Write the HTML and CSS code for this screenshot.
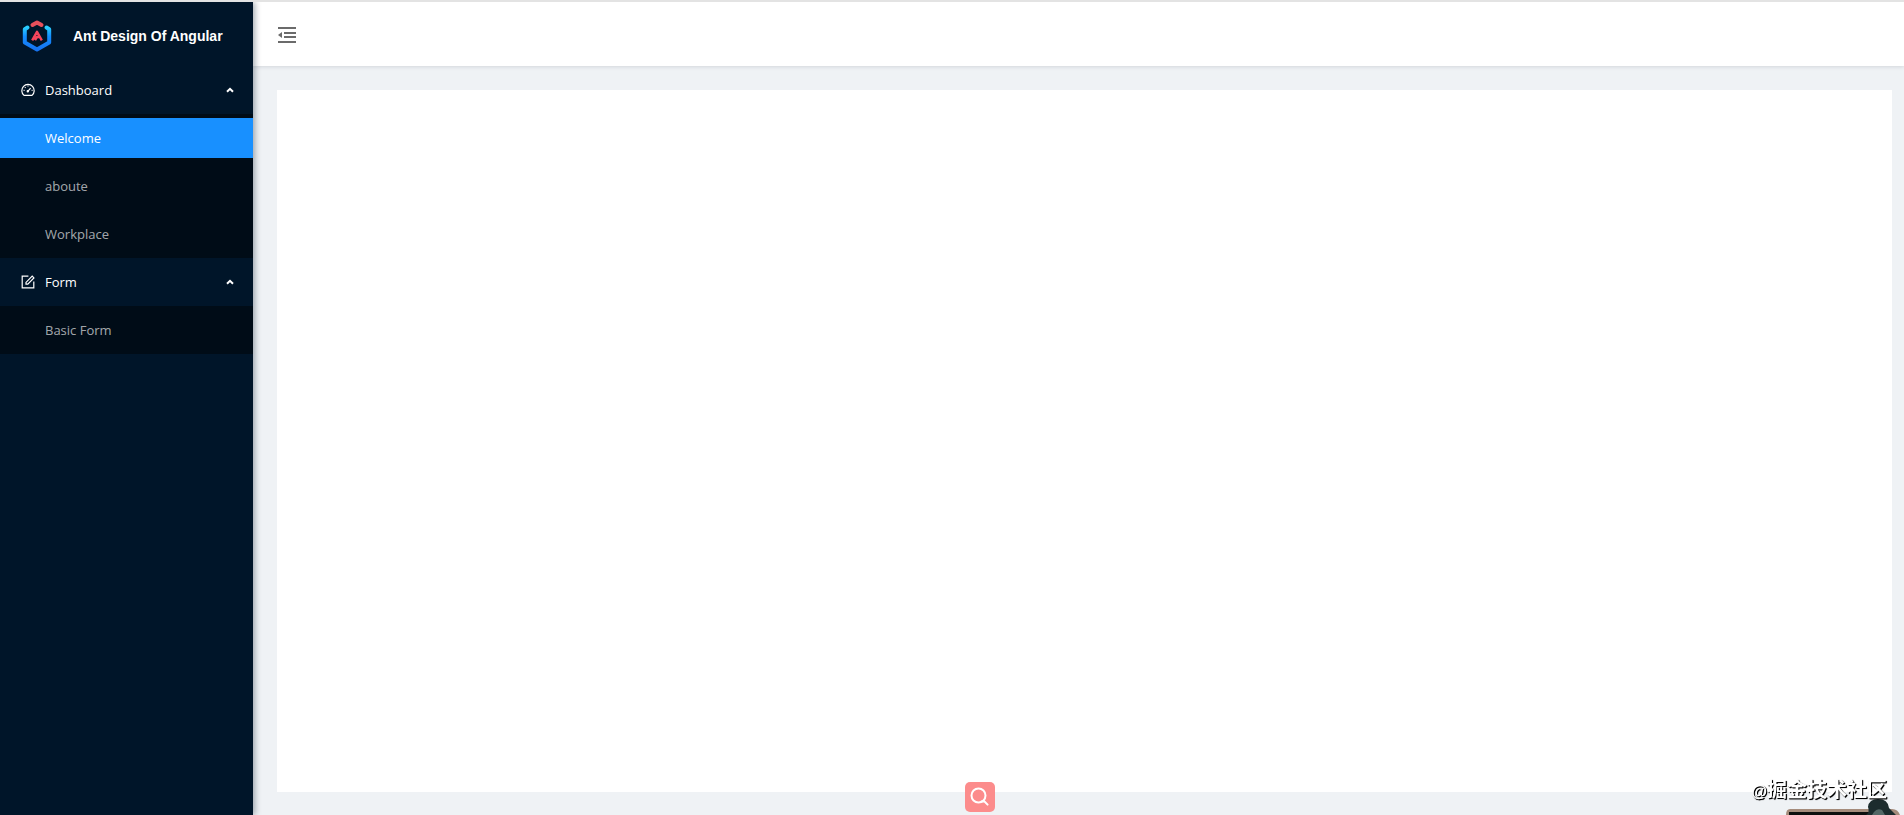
FILE: index.html
```html
<!DOCTYPE html>
<html lang="en">
<head>
    <meta charset="UTF-8">
    <meta name="viewport" content="width=device-width, initial-scale=1.0">
    <title>Ant Design Of Angular</title>
    <link rel="stylesheet" href="styles.css">
</head>
<body>
    <div class="layout">
        <!-- Sidebar -->
        <aside class="sidebar">
            <a class="brand" href="#">
                <svg class="logo" viewBox="0 0 32 32" aria-hidden="true">
                    <defs>
                        <linearGradient id="blue" x1="0" y1="0" x2="0" y2="1">
                            <stop offset="0" stop-color="#29cdff"/>
                            <stop offset="0.4" stop-color="#148eff"/>
                            <stop offset="1" stop-color="#1673f0"/>
                        </linearGradient>
                        <linearGradient id="red" x1="0" y1="0" x2="0" y2="1">
                            <stop offset="0" stop-color="#fa816e"/>
                            <stop offset="1" stop-color="#f51d2c"/>
                        </linearGradient>
                    </defs>
                    <path d="M6.5 7.5 3.8 9.2V22.6L16 29.6 28.2 22.6V9.2L25.5 7.5" fill="none" stroke="url(#blue)" stroke-width="4" stroke-linecap="round" stroke-linejoin="round"/>
                    <path d="M11.5 5 16 2.4 20.5 5" fill="none" stroke="#e8505b" stroke-width="4" stroke-linecap="round" stroke-linejoin="round"/>
                    <path d="M11.2 20.4 16 11.8l4.8 8.6M14 20.2l2-3.2h2.6" fill="none" stroke="#f5455c" stroke-width="2.4" stroke-linejoin="round"/>
                </svg>
                <span class="brand-name">Ant Design Of Angular</span>
            </a>
            <nav class="menu">
                <button class="menu-title" type="button" aria-expanded="true">
                    <svg class="menu-icon" viewBox="0 0 14 14" aria-hidden="true">
                        <path d="M3 12.4a6.2 6.2 0 1 1 8 0z"/>
                        <path d="M6.8 8.4 9.6 5.2M7 2.6v1M2.6 7.4h1M10.6 7.4h1M3.9 4.2l.7.7"/>
                        <circle cx="6.8" cy="8.2" r=".6"/>
                    </svg>
                    <span>Dashboard</span>
                    <svg class="arrow" viewBox="0 0 8 6" aria-hidden="true"><path d="M1 4.8 4 1.8l3 3"/></svg>
                </button>
                <ul class="submenu">
                    <li><a class="menu-item selected" href="#">Welcome</a></li>
                    <li><a class="menu-item" href="#">aboute</a></li>
                    <li><a class="menu-item" href="#">Workplace</a></li>
                </ul>
                <button class="menu-title" type="button" aria-expanded="true">
                    <svg class="menu-icon" viewBox="0 0 14 14" aria-hidden="true">
                        <path d="M7.4 1.2H1.2v11.6h11.6V6.6"/>
                        <path d="M5 9.2V7.4L11.2 1.2l1.7 1.7L6.8 9.2z"/>
                    </svg>
                    <span>Form</span>
                    <svg class="arrow" viewBox="0 0 8 6" aria-hidden="true"><path d="M1 4.8 4 1.8l3 3"/></svg>
                </button>
                <ul class="submenu">
                    <li><a class="menu-item" href="#">Basic Form</a></li>
                </ul>
            </nav>
        </aside>

        <div class="main">
            <header class="header">
                <button class="trigger" type="button" aria-label="Collapse menu">
                    <svg viewBox="0 0 18 16" aria-hidden="true">
                        <path d="M0 1h18M6 6h12M6 10h12M0 15h18" fill="none" stroke="currentColor" stroke-width="2"/>
                        <path d="M0 8l4-3v6z" fill="currentColor"/>
                    </svg>
                </button>
            </header>
            <main class="content"></main>
        </div>
    </div>

    <!-- Floating items over the page -->
    <button class="search" type="button" aria-label="Search">
        <svg viewBox="0 0 20 20" aria-hidden="true">
            <circle cx="8.5" cy="8.5" r="7"/>
            <path d="M11.5 14.5h3M14 14l3.6 3.6"/>
        </svg>
    </button>
    <svg class="pet" viewBox="0 0 120 20" aria-hidden="true">
        <path d="M2 20q0-6 4-6h102q6 0 8 6z" fill="#a58c7c"/>
        <path d="M5 20v-3h100v3z" fill="#0d100f"/>
        <path d="M82 20q4-3 2-8 1-8 10-8 10 0 11 9l7 7z" fill="#1c2c2e"/>
        <path d="M90 17q3-4 8-2l3 5H88z" fill="#536766"/>
    </svg>
    <div class="watermark"><span class="at">@</span>掘金技术社区</div>
</body>
</html>
```
FILE: styles.css
```css
* {
    box-sizing: border-box;
    margin: 0;
    padding: 0;
}

body {
    font-family: "Open Sans", "Noto Sans", sans-serif;
    font-size: 13px;
    background-color: #eff2f5;
    border-top: 2px solid #e3e3e3;
    min-height: 100vh;
    display: flex;
}

a {
    text-decoration: none;
}

button {
    border: none;
    background: none;
    font: inherit;
    cursor: pointer;
}

.layout {
    display: flex;
    flex: 1;
}

.sidebar {
    width: 253px;
    flex-shrink: 0;
    background-color: #001529;
    box-shadow: 2px 0 6px rgba(0, 21, 41, 0.35);
    position: relative;
    z-index: 2;
}

.brand {
    display: flex;
    align-items: center;
    height: 64px;
    padding: 4px 0 0 21px;
    gap: 20px;
}

.logo {
    width: 32px;
    height: 32px;
}

.brand-name {
    color: #fff;
    font-family: "Liberation Sans", Arial, sans-serif;
    font-size: 14px;
    font-weight: bold;
}

.menu-title {
    display: flex;
    align-items: center;
    width: 100%;
    height: 48px;
    padding: 0 19px 0 21px;
    gap: 10px;
    color: #fff;
}

.menu-icon {
    width: 14px;
    height: 14px;
    fill: none;
    stroke: currentColor;
    stroke-width: 1.2;
}

.arrow {
    width: 8px;
    height: 6px;
    margin-left: auto;
    fill: none;
    stroke: currentColor;
    stroke-width: 2;
}

.submenu {
    list-style: none;
    background-color: #000c17;
    display: flow-root;
}

.menu-item {
    display: block;
    height: 40px;
    line-height: 40px;
    margin: 4px 0 8px;
    padding-left: 45px;
    color: rgba(255, 255, 255, 0.65);
}

.submenu li:last-child .menu-item {
    margin-bottom: 4px;
}

.menu-item.selected {
    background-color: #1890ff;
    color: #fff;
}

.main {
    flex: 1;
    display: flex;
    flex-direction: column;
}

.header {
    display: flex;
    align-items: center;
    height: 64px;
    padding: 2px 25px 0;
    background-color: #fff;
    box-shadow: 0 1px 4px rgba(0, 21, 41, 0.12);
}

.trigger {
    display: flex;
    color: #6b6b6b;
}

.trigger svg {
    width: 18px;
    height: 16px;
}

.content {
    flex: 1;
    margin: 24px 12px 23px 24px;
    background-color: #fff;
}

.search {
    position: fixed;
    left: 965px;
    bottom: 3px;
    z-index: 3;
    display: flex;
    align-items: center;
    justify-content: center;
    width: 30px;
    height: 30px;
    border-radius: 5px;
    background-color: #fc8c8c;
}

.search svg {
    width: 20px;
    height: 20px;
    fill: none;
    stroke: #fff;
    stroke-width: 2;
    stroke-linecap: round;
}

.watermark {
    position: fixed;
    right: 17px;
    bottom: 8px;
    z-index: 3;
    color: #fff;
    font-family: "Liberation Sans", "Noto Sans CJK SC", sans-serif;
    font-size: 20px;
    font-weight: bold;
    line-height: 30px;
    text-shadow: 1px 1px 0 #000, 1px 1px 1px #000;
}

.watermark .at {
    font-size: 16px;
}

.pet {
    position: fixed;
    right: 0;
    bottom: 0;
    z-index: 3;
    width: 120px;
    height: 20px;
}
```
